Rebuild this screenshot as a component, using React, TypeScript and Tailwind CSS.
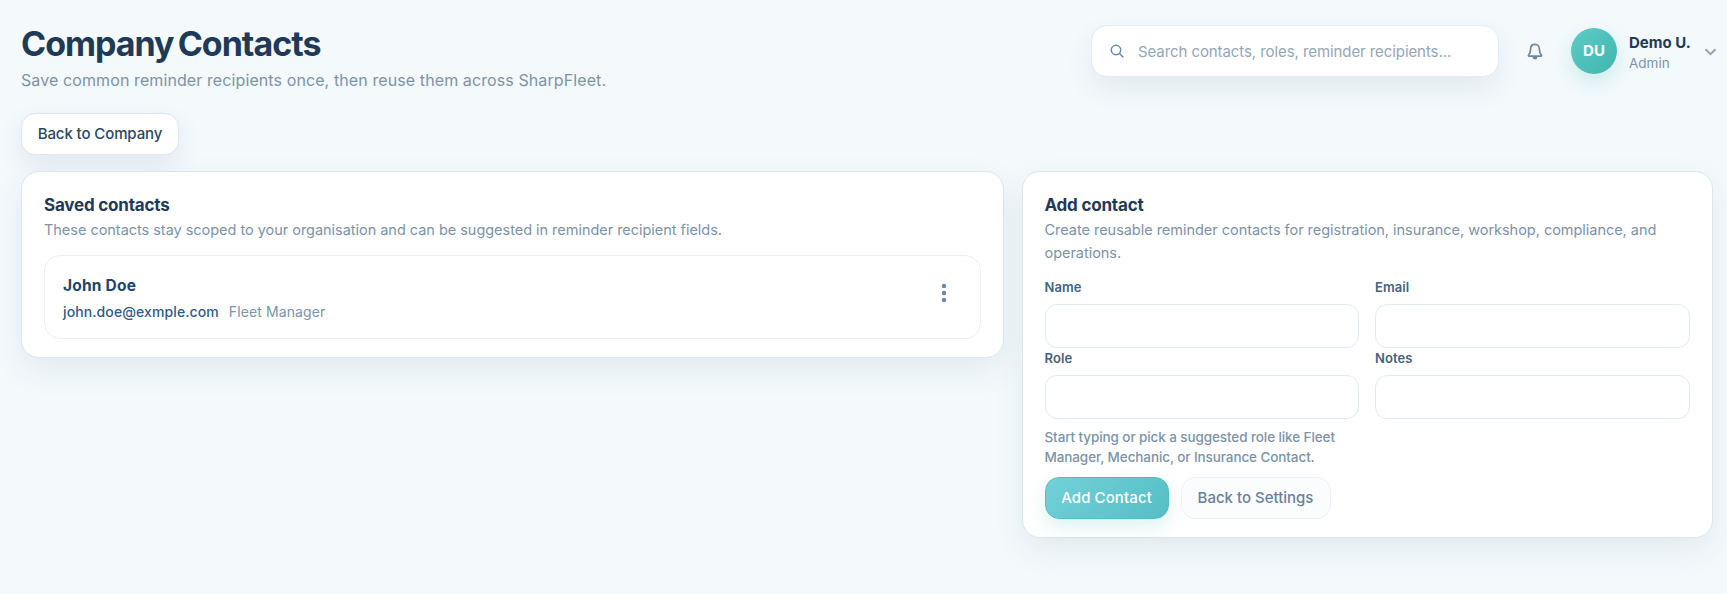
import { useState } from 'react';
import { MoreVertical } from 'lucide-react';
import clsx from 'clsx';

interface Contact {
  name: string;
  email: string;
  role: string;
}

const contacts: Contact[] = [
  { name: 'John Doe', email: 'john.doe@exmple.com', role: 'Fleet Manager' },
];

const cardClass =
  'rounded-[18px] border border-[#d9e7ee] bg-white px-[22px] shadow-[0_12px_32px_rgba(31,58,86,0.08)]';

function SearchIcon() {
  return (
    <svg width="14" height="14" viewBox="0 0 14 14" fill="none" stroke="#6f88a1" strokeWidth="1.5" strokeLinecap="round">
      <circle cx="6" cy="6" r="4.700" />
      <path d="M9.500 9.500l3.500 3.500" />
    </svg>
  );
}

function BellIcon() {
  return (
    <svg width="16" height="17" viewBox="0 0 16 17" fill="none" stroke="#6f88a1" strokeWidth="1.7" strokeLinejoin="round">
      <path d="M8 1.400c-2.700 0-4.400 2-4.400 4.600 0 3.300-.6 4.800-1.900 6-.5.5-.3 1.200.4 1.200h11.800c.7 0 .9-.7.4-1.200-1.300-1.200-1.900-2.700-1.900-6C12.400 3.400 10.700 1.400 8 1.400z" />
      <path d="M5.500 14c.2 1.700 1.200 2.500 2.500 2.500s2.300-.8 2.500-2.500z" fill="#6f88a1" stroke="none" />
    </svg>
  );
}

function Field({ label, hint }: { label: string; hint?: string }) {
  const [value, setValue] = useState('');

  return (
    <label className="block">
      <span className="block h-[26px] text-[13px] leading-[18px] font-semibold tracking-[0.1px] text-[#45637f]">{label}</span>
      <input
        value={value}
        onChange={e => setValue(e.target.value)}
        className="block h-[44px] w-full rounded-xl border border-[#e1ebf1] bg-white px-3 text-sm text-[#1f3a56] outline-none focus:border-[#5cc4cc]"
      />
      {hint && (
        <span className="mt-[8px] block text-[13.500px] leading-5 font-medium tracking-[-0.1px] text-[#7c93a8]">{hint}</span>
      )}
    </label>
  );
}

function Header() {
  return (
    <header className="flex h-[92px] items-start justify-between">
      <div>
        <h1 className="h-[45px] text-[34px] leading-[42px] font-bold tracking-[-1px] [word-spacing:-3px] text-[#1f3a56]">
          Company Contacts
        </h1>
        <p className="text-[16px] leading-[24px] tracking-[0.1px] text-[#7c93a8]">
          Save common reminder recipients once, then reuse them across SharpFleet.
        </p>
      </div>
      <div className="flex items-center pt-[2px]">
        <div className="flex h-[52px] w-[408px] items-center gap-[14px] rounded-2xl border border-[#e1edf2] bg-white pl-[18px] shadow-[0_12px_28px_rgba(31,58,86,0.08)]">
          <SearchIcon />
          <input
            placeholder="Search contacts, roles, reminder recipients..."
            className="w-[340px] bg-transparent pt-[2px] text-[15px] tracking-[-0.08px] outline-none placeholder:text-[#94a6b8]"
          />
        </div>
        <button className="ml-[28px]">
          <BellIcon />
        </button>
        <div className="ml-[28px] flex h-[46px] w-[46px] items-center justify-center rounded-full bg-linear-135 from-[#5cccc6] to-[#40b5ae] pt-px text-[15px] font-bold text-white shadow-[0_8px_20px_rgba(64,190,180,0.22)]">
          DU
        </div>
        <div className="ml-[12px] w-[75px] pt-[2px]">
          <p className="text-[15px] leading-[21px] font-bold text-[#1f3a56]">Demo U.</p>
          <p className="text-[13.500px] leading-5 text-[#7c93a8]">Admin</p>
        </div>
        <svg className="mt-px mr-[-4px]" width="13" height="8" viewBox="0 0 13 8" fill="none" stroke="#91a4b6" strokeWidth="2">
          <path d="M1.500 1.200l5 5 5-5" />
        </svg>
      </div>
    </header>
  );
}

function SectionTitle({ title, text }: { title: string; text: string }) {
  return (
    <div>
      <h2 className="text-[17px] leading-[24px] font-bold tracking-[-0.2px] text-[#1f3a56]">{title}</h2>
      <p className="mt-px text-[14.500px] leading-[23px] tracking-[-0.03px] text-[#7c93a8]">{text}</p>
    </div>
  );
}

export default function App() {
  return (
    <div className="min-h-screen bg-[#f4f9fc] pt-[23px] pr-[14px] pl-[21px] font-['Inter',sans-serif]">
      <Header />

      <button className="mt-[-2px] flex h-[42px] w-[158px] items-center justify-center rounded-[14px] border border-[#dbe8ef] bg-white text-[15px] font-medium tracking-[-0.1px] text-[#2b4764] shadow-[0_10px_26px_rgba(31,58,86,0.09)]">
        Back to Company
      </button>

      <main className="mt-[16px] grid grid-cols-[982.500px_691px] items-start gap-[18px]">
        <section className={clsx(cardClass, 'h-[187px] pt-[21px]')}>
          <SectionTitle
            title="Saved contacts"
            text="These contacts stay scoped to your organisation and can be suggested in reminder recipient fields."
          />
          {contacts.map(c => (
            <div
              key={c.email}
              className="mt-[14px] flex h-[84px] items-start justify-between rounded-2xl border border-[#eceff2] pt-[18px] pr-[24px] pl-[18px]"
            >
              <div>
                <p className="text-[15.500px] leading-[24px] font-bold tracking-[0.2px] text-[#22456a]">{c.name}</p>
                <p className="mt-[3px] flex gap-[10px] text-[14px] leading-[22px] tracking-[0.1px]">
                  <span className="font-medium text-[#2f5b88]">{c.email}</span>
                  <span className="text-[#7c93a8]">{c.role}</span>
                </p>
              </div>
              <button className="mt-[7px] text-[#6b85a3]">
                <MoreVertical size={24} strokeWidth={2.400} />
              </button>
            </div>
          ))}
        </section>

        <section className={clsx(cardClass, 'h-[367px] pt-[21px]')}>
          <SectionTitle
            title="Add contact"
            text="Create reusable reminder contacts for registration, insurance, workshop, compliance, and operations."
          />
          <form className="mt-[14px]" onSubmit={e => e.preventDefault()}>
            <div className="grid grid-cols-2 gap-x-4 gap-y-[1px]">
              <Field label="Name" />
              <Field label="Email" />
              <Field label="Role" hint="Start typing or pick a suggested role like Fleet Manager, Mechanic, or Insurance Contact." />
              <Field label="Notes" />
            </div>
            <div className="mt-[10px] flex gap-3">
              <button className="h-[42px] w-[124px] rounded-[14px] border border-[#55bcc3] bg-linear-135 from-[#73d1d8] to-[#55bec6] pt-px text-[15px] font-medium tracking-[0.1px] text-white shadow-[0_8px_18px_rgba(64,190,180,0.18)]">
                Add Contact
              </button>
              <button className="h-[42px] w-[150px] rounded-[14px] border border-[#edf1f6] bg-[#fbfcfe] pt-px text-[15px] font-medium text-[#6b7f9b]">
                Back to Settings
              </button>
            </div>
          </form>
        </section>
      </main>
    </div>
  );
}
